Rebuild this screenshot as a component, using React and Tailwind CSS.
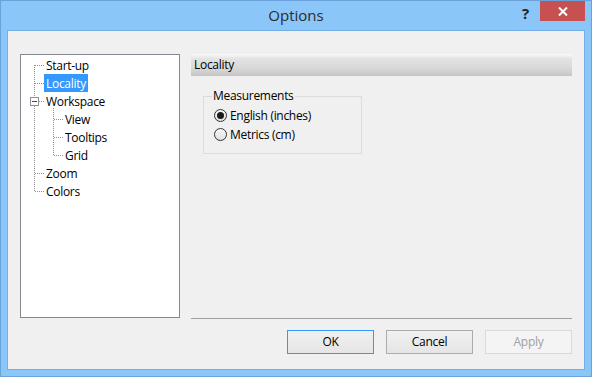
import { useState } from 'react';

const treeItems = [
  { id: 'startup', label: 'Start-up', level: 1 },
  { id: 'locality', label: 'Locality', level: 1 },
  { id: 'workspace', label: 'Workspace', level: 1 },
  { id: 'view', label: 'View', level: 2 },
  { id: 'tooltips', label: 'Tooltips', level: 2 },
  { id: 'grid', label: 'Grid', level: 2 },
  { id: 'zoom', label: 'Zoom', level: 1 },
  { id: 'colors', label: 'Colors', level: 1 },
];

function TreeLines() {
  // dotted connectors, coordinates relative to the tree box's inner edge
  const dot = { stroke: '#8f8f8f', strokeWidth: 1, strokeDasharray: '1 1', fill: 'none' };
  return (
    <svg className="absolute left-0 top-0 pointer-events-none" width="158" height="220">
      <path d="M13.5 10 V42" {...dot} />
      <path d="M13.5 51 V137" {...dot} />
      <path d="M14 10.5 H23 M14 28.5 H23 M18 46.5 H23 M14 118.5 H23 M14 136.5 H23" {...dot} />
      <path d="M32.5 53 V101" {...dot} />
      <path d="M33 64.5 H42 M33 82.5 H42 M33 100.5 H42" {...dot} />
      <rect x="9.5" y="42.5" width="8" height="8" fill="#fff" stroke="#919191" />
      <path d="M11 46.5 H16" stroke="#2b4f9a" strokeWidth="1" />
    </svg>
  );
}

function Radio({ checked, label, onClick }) {
  return (
    <button onClick={onClick} className="flex items-center h-[19px] text-[#000]">
      <span className="w-[13px] h-[13px] rounded-full border border-[#333] bg-gradient-to-b from-[#f6f6f6] to-[#e2e2e2] flex items-center justify-center">
        {checked && <span className="w-[7px] h-[7px] rounded-full bg-[#1a1a1a]" />}
      </span>
      <span className="ml-[3px]">{label}</span>
    </button>
  );
}

export default function App() {
  const [selected, setSelected] = useState('locality');
  const [units, setUnits] = useState('english');

  return (
    <div
      className="w-[592px] h-[377px] bg-[#8bc6f8] border border-[#6aa3dc] flex flex-col text-[12px] tracking-[-0.3px] text-black"
      style={{ fontFamily: '"Open Sans", "Noto Sans", sans-serif' }}
    >
      {/* title bar */}
      <div className="h-[29px] flex items-start relative">
        <div className="flex-1 text-center text-[15px] tracking-normal leading-[29px] text-[#2b2b2b]">Options</div>
        <span className="absolute left-[521px] top-[3px] text-[15px] font-bold text-[#222] leading-[18px]">?</span>
        <button className="absolute left-[539px] top-0 w-[45px] h-[20px] bg-[#c75050] flex items-center justify-center">
          <svg width="10" height="9" viewBox="0 0 10 9">
            <path d="M1 0.5 L9 8.5 M9 0.5 L1 8.5" stroke="#fff" strokeWidth="2" />
          </svg>
        </button>
      </div>

      {/* client area */}
      <div className="flex-1 mx-[6px] mb-[6px] bg-[#f0f0f0] border border-[#75ade6] flex flex-col pt-[23px] pl-[12px] pr-[11px]">
        <div className="flex items-start gap-[11px]">
          <div className="w-[160px] h-[264px] bg-white border border-[#828790] relative pt-[1px]">
            <TreeLines />
            {treeItems.map((item) => (
              <div key={item.id} className={`h-[18px] flex items-center ${item.level === 1 ? 'pl-[23px]' : 'pl-[42px]'}`}>
                <button
                  onClick={() => setSelected(item.id)}
                  className={`h-[18px] px-[2px] leading-[19px] ${selected === item.id ? 'bg-[#3399ff] text-white' : 'text-black'}`}
                >
                  {item.label}
                </button>
              </div>
            ))}
          </div>

          <div className="w-[381px] h-[265px] flex flex-col">
            <div className="h-[22px] bg-[linear-gradient(to_bottom,#fbfbfb_0%,#e4e4e4_20%,#d8d8d8_65%,#c6c6c6_100%)] pl-[3px] leading-[22px] text-black">
              Locality
            </div>
            <div className="flex-1 pt-[12px] pl-[12px]">
              <fieldset className="w-[159px] h-[66px] border border-[#dcdcdc]">
                <legend className="ml-[8px] px-[1px] leading-[16px]">Measurements</legend>
                <div className="flex flex-col mt-[2px] pl-[10px]">
                  <Radio checked={units === 'english'} label="English (inches)" onClick={() => setUnits('english')} />
                  <Radio checked={units === 'metric'} label="Metrics (cm)" onClick={() => setUnits('metric')} />
                </div>
              </fieldset>
            </div>
            <div className="h-px bg-[#a0a0a0]" />
          </div>
        </div>

        <div className="flex justify-end gap-[12px] mt-[11px] pr-[1px]">
          <button className="w-[87px] h-[24px] border border-[#3399ff] bg-gradient-to-b from-[#f0f0f0] to-[#e5e5e5]">OK</button>
          <button className="w-[87px] h-[24px] border border-[#acacac] bg-gradient-to-b from-[#f0f0f0] to-[#e5e5e5]">Cancel</button>
          <button className="w-[87px] h-[24px] border border-[#d9d9d9] bg-[#f4f4f4] text-[#a0a0a0]">Apply</button>
        </div>
      </div>
    </div>
  );
}
